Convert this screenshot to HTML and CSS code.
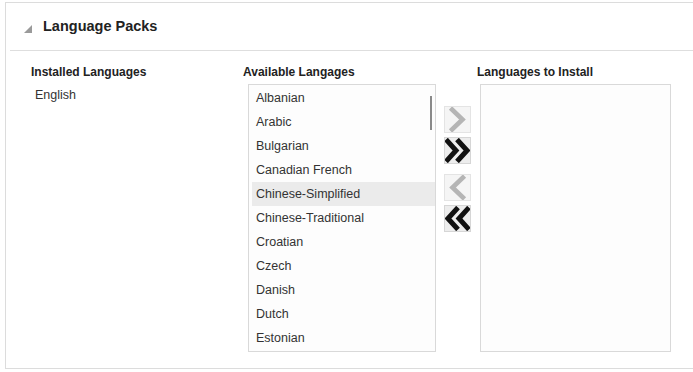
FILE: index.html
```html
<!DOCTYPE html>
<html>
<head>
<meta charset="utf-8">
<link rel="stylesheet" href="styles.css">
</head>
<body>
<div class="panel">
  <div class="header">
    <span class="disclosure"></span>
    <h1 class="title">Language Packs</h1>
  </div>
  <div class="columns">
    <div class="col col-installed">
      <div class="col-heading">Installed Languages</div>
      <div class="installed-item">English</div>
    </div>
    <div class="col col-available">
      <div class="col-heading">Available Langages</div>
      <div class="listbox listbox-available">
        <div class="row">Albanian</div>
        <div class="row">Arabic</div>
        <div class="row">Bulgarian</div>
        <div class="row">Canadian French</div>
        <div class="row row-selected">Chinese-Simplified</div>
        <div class="row">Chinese-Traditional</div>
        <div class="row">Croatian</div>
        <div class="row">Czech</div>
        <div class="row">Danish</div>
        <div class="row">Dutch</div>
        <div class="row">Estonian</div>
        <div class="scrollbar"></div>
      </div>
    </div>
    <div class="shuttle">
      <div class="btn btn-disabled">
        <svg viewBox="0 0 27 27" width="27" height="27"><polyline points="6.5,2 18.5,13.5 6.5,25" fill="none" stroke="#b5b5b5" stroke-width="4.6"/></svg>
      </div>
      <div class="btn">
        <svg viewBox="0 0 27 27" width="27" height="27"><polyline points="2,2.5 12,13.5 2,24.5" fill="none" stroke="#111" stroke-width="5"/><polyline points="13,2.5 23,13.5 13,24.5" fill="none" stroke="#111" stroke-width="5"/></svg>
      </div>
      <div class="btn btn-disabled btn-group2">
        <svg viewBox="0 0 27 27" width="27" height="27"><polyline points="20.5,2 8.5,13.5 20.5,25" fill="none" stroke="#b5b5b5" stroke-width="4.6"/></svg>
      </div>
      <div class="btn">
        <svg viewBox="0 0 27 27" width="27" height="27"><polyline points="14,2.5 4,13.5 14,24.5" fill="none" stroke="#111" stroke-width="5"/><polyline points="25,2.5 15,13.5 25,24.5" fill="none" stroke="#111" stroke-width="5"/></svg>
      </div>
    </div>
    <div class="col col-install">
      <div class="col-heading">Languages to Install</div>
      <div class="listbox listbox-install"></div>
    </div>
  </div>
</div>
</body>
</html>
```
FILE: styles.css
```css
html, body {
  margin: 0;
  padding: 0;
  background: #ffffff;
  overflow: hidden;
}
body {
  width: 693px;
  height: 372px;
  font-family: "Liberation Sans", Arial, sans-serif;
  color: #333;
}
.panel {
  margin: 2px 0 0 5px;
  width: 720px;
  height: 365px;
  border: 1px solid #dcdcdc;
  border-right: 0;
}
.header {
  margin-left: 4px;
  height: 47px;
  border-bottom: 1px solid #dedede;
  display: flex;
  align-items: center;
  padding-left: 14px;
}
.disclosure {
  width: 0;
  height: 0;
  border-style: solid;
  border-width: 0 0 8px 8px;
  border-color: transparent transparent #9a9a9a transparent;
  margin-top: 4px;
}
.title {
  margin: 0 0 0 11px;
  font-size: 14.5px;
  line-height: 17px;
  font-weight: bold;
  color: #222;
}
.columns {
  display: flex;
  padding: 14px 0 0 25px;
}
.col-heading {
  font-size: 12px;
  line-height: 14px;
  font-weight: bold;
  color: #222;
  white-space: nowrap;
}
.col-installed {
  width: 212px;
}
.installed-item {
  margin-top: 4px;
  padding-left: 4px;
  font-size: 12.5px;
  line-height: 24px;
}
.col-available {
  width: 193px;
}
.col-available .col-heading,
.col-install .col-heading {
  margin-bottom: 5px;
}
.listbox {
  border: 1px solid #d9d9d9;
  height: 266px;
  background: #fdfdfd;
  box-sizing: content-box;
}
.listbox-available {
  position: relative;
  margin-left: 5px;
  width: 186px;
  padding-top: 1px;
  height: 265px;
}
.row {
  margin-left: 3px;
  padding-left: 4px;
  font-size: 12.5px;
  line-height: 24px;
  height: 24px;
  white-space: nowrap;
}
.row-selected {
  background: #ebebeb;
}
.scrollbar {
  position: absolute;
  left: 181px;
  top: 11px;
  width: 2px;
  height: 34px;
  background: #8a8a8a;
}
.shuttle {
  margin-left: 8px;
  width: 28px;
  padding-top: 41px;
  display: flex;
  flex-direction: column;
  gap: 4px;
}
.btn {
  width: 27px;
  height: 27px;
  box-sizing: border-box;
  background: #ededed;
  border: 1px solid #d6d6d6;
  display: flex;
  align-items: center;
  justify-content: center;
  overflow: hidden;
}
.btn svg {
  display: block;
  flex: none;
}
.btn-disabled {
  background: #f5f5f5;
  border-color: #e4e4e4;
}
.btn-group2 {
  margin-top: 6px;
}
.col-install {
  margin-left: 5px;
  width: 196px;
}
.listbox-install {
  margin-left: 3px;
  width: 189px;
}
```
